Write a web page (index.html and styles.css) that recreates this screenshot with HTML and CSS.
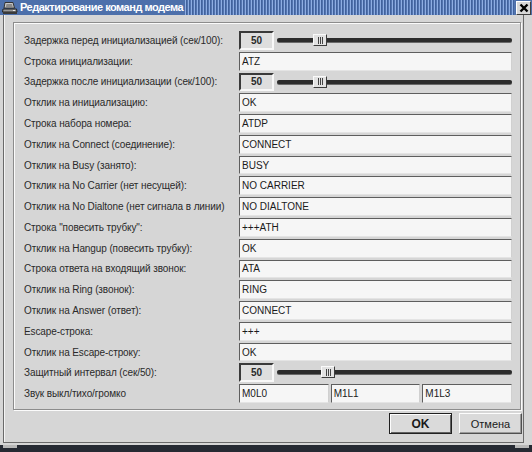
FILE: index.html
```html
<!DOCTYPE html>
<html lang="ru">
<head>
<meta charset="utf-8">
<title>Редактирование команд модема</title>
<link rel="stylesheet" href="styles.css">
</head>
<body>
<div class="titlebar">
  <svg class="appicon" width="16" height="14" viewBox="0 0 16 14">
    <path d="M3 1.5 L11 1.5 L12.5 7 L2 7 Z" fill="#c8c8c8" stroke="#333" stroke-width="1"/>
    <path d="M4.5 3 L10 3 L10.8 6 L3.8 6 Z" fill="#8a8a8a"/>
    <path d="M1 8 L14.5 8 L15 11 L0.5 11 Z" fill="#9a9a9a" stroke="#222" stroke-width="1"/>
    <rect x="1" y="11" width="14" height="2" fill="#3a3a3a"/>
    <rect x="11" y="9" width="2" height="1" fill="#e8e8e8"/>
  </svg>
  <span class="title">Редактирование команд модема</span>
  <span class="pattern"></span>
  <span class="close">
    <svg width="10" height="10" viewBox="0 0 10 10"><path d="M1.5 1.5 L8.5 8.5 M8.5 1.5 L1.5 8.5" stroke="#000" stroke-width="2.4"/></svg>
  </span>
</div>
<div class="frame">
  <div class="client">
    <div class="group">
      <div class="form">
        <div class="label">Задержка перед инициализацией (сек/100):</div>
        <div class="spinrow"><div class="spin">50</div><div class="slider"><span class="track"></span><span class="thumb" style="left:36px"><i></i><i></i><i></i></span></div></div>

        <div class="label">Строка инициализации:</div>
        <div class="field">ATZ</div>

        <div class="label">Задержка после инициализации (сек/100):</div>
        <div class="spinrow"><div class="spin">50</div><div class="slider"><span class="track"></span><span class="thumb" style="left:36px"><i></i><i></i><i></i></span></div></div>

        <div class="label">Отклик на инициализацию:</div>
        <div class="field">OK</div>

        <div class="label">Строка набора номера:</div>
        <div class="field">ATDP</div>

        <div class="label">Отклик на Connect (соединение):</div>
        <div class="field">CONNECT</div>

        <div class="label">Отклик на Busy (занято):</div>
        <div class="field">BUSY</div>

        <div class="label">Отклик на No Carrier (нет несущей):</div>
        <div class="field">NO CARRIER</div>

        <div class="label">Отклик на No Dialtone (нет сигнала в линии)</div>
        <div class="field">NO DIALTONE</div>

        <div class="label">Строка "повесить трубку":</div>
        <div class="field">+++ATH</div>

        <div class="label">Отклик на Hangup (повесить трубку):</div>
        <div class="field">OK</div>

        <div class="label">Строка ответа на входящий звонок:</div>
        <div class="field">ATA</div>

        <div class="label">Отклик на Ring (звонок):</div>
        <div class="field">RING</div>

        <div class="label">Отклик на Answer (ответ):</div>
        <div class="field">CONNECT</div>

        <div class="label">Escape-строка:</div>
        <div class="field">+++</div>

        <div class="label">Отклик на Escape-строку:</div>
        <div class="field">OK</div>

        <div class="label">Защитный интервал (сек/50):</div>
        <div class="spinrow"><div class="spin">50</div><div class="slider"><span class="track"></span><span class="thumb" style="left:44px"><i></i><i></i><i></i></span></div></div>

        <div class="label">Звук выкл/тихо/громко</div>
        <div class="triple"><div class="field">M0L0</div><div class="field">M1L1</div><div class="field">M1L3</div></div>
      </div>
    </div>
    <div class="buttons">
      <button class="btn default">OK</button>
      <button class="btn">Отмена</button>
    </div>
  </div>
</div>
<div class="taskbar"><span class="seg"></span><span class="fill"></span><span class="seg"></span></div>
</body>
</html>
```
FILE: styles.css
```css
* { box-sizing: border-box; }
html, body { margin: 0; padding: 0; }
body {
  width: 532px;
  height: 452px;
  overflow: hidden;
  background: #d6d6d6;
  font-family: "Liberation Sans", Arial, sans-serif;
  font-size: 10px;
  color: #2a2a2a;
}

/* title bar */
.titlebar {
  height: 15px;
  display: flex;
  align-items: center;
  background: #4d70ab;
}
.appicon { flex: none; margin: 0 2px 0 2px; }
.title {
  flex: none;
  color: #fff;
  font-weight: bold;
  font-size: 11px;
  letter-spacing: -0.5px;
  line-height: 15px;
  padding-right: 2px;
  background: #4d70ab;
}
.pattern {
  flex: 1;
  align-self: stretch;
  background-color: #5375b0;
  background-image:
    linear-gradient(90deg, #8eaee3 1px, transparent 1px),
    linear-gradient(90deg, #41629c 1px, transparent 1px);
  background-size: 3px 3px, 3px 3px;
  background-position: 0 0, 1px 1px;
}
.close {
  flex: none;
  width: 15px;
  height: 14px;
  margin: 0 1px 0 1px;
  background: #d8d8d8;
  border: 1px solid;
  border-color: #fff #404040 #404040 #fff;
  display: flex;
  align-items: center;
  justify-content: center;
}

/* window frame */
.frame {
  padding: 0 8px 2px 3px;
}
.client {
  height: 428px;
  border: 1px solid #6a6a6a;
  border-top: none;
  box-shadow: inset 1px 0 0 #f4f4f4;
  padding: 7px 1px 8px 9px;
  display: flex;
  flex-direction: column;
}
.group {
  height: 388px;
  margin-right: 1px;
  border: 1px solid #8c8c8c;
  box-shadow: inset 1px 1px 0 #fbfbfb, 1px 1px 0 #fbfbfb;
  padding: 8px 8px 6px 10px;
}
.form {
  height: 372px;
  display: grid;
  grid-template-columns: 215px 1fr;
  grid-template-rows: repeat(18, 1fr);
  row-gap: 2px;
}
.label {
  display: flex;
  align-items: center;
  white-space: nowrap;
  overflow: visible;
  letter-spacing: -0.1px;
}
.field {
  background: #f6f6f6;
  border: 1px solid;
  border-color: #5e5e5e #d0d0d0 #e4e4e4 #5e5e5e;
  padding: 0 2px;
  display: flex;
  align-items: center;
  white-space: nowrap;
  color: #1a1a1a;
}
.triple {
  display: grid;
  grid-template-columns: 1fr 1fr 1fr;
  column-gap: 2px;
}
.spinrow {
  display: flex;
  gap: 3px;
}
.spin {
  width: 35px;
  flex: none;
  background: #dedede;
  border: 2px solid;
  border-color: #3a3a3a #f8f8f8 #f8f8f8 #3a3a3a;
  display: flex;
  align-items: center;
  justify-content: center;
  font-weight: bold;
  color: #2a2a2a;
}
.slider {
  flex: 1;
  position: relative;
}
.track {
  position: absolute;
  left: 0;
  right: 0;
  top: 7px;
  height: 4px;
  border-radius: 2px;
  background: #2c2c2c;
  box-shadow: 0 1px 0 #6a6a6a;
}
.thumb {
  position: absolute;
  top: 3px;
  width: 14px;
  height: 12px;
  background: #e2e2e2;
  border: 1px solid;
  border-color: #fafafa #3c3c3c #3c3c3c #fafafa;
  display: flex;
  justify-content: center;
  align-items: center;
  gap: 1px;
}
.thumb i {
  display: block;
  width: 1px;
  height: 7px;
  background: #444;
}

/* buttons */
.buttons {
  margin-top: 3px;
  display: flex;
  justify-content: flex-end;
  gap: 7px;
}
.btn {
  width: 63px;
  height: 21px;
  margin: 0;
  padding: 0;
  background: #dadada;
  border: 1px solid;
  border-color: #fdfdfd #505050 #505050 #fdfdfd;
  box-shadow: inset -1px -1px 0 #9a9a9a;
  font-family: "Liberation Sans", Arial, sans-serif;
  font-size: 11px;
  color: #1a1a1a;
}
.btn.default {
  border: 1px solid #202020;
  box-shadow: inset 1px 1px 0 #fdfdfd, inset -1px -1px 0 #606060;
  font-weight: bold;
  font-size: 12px;
}

/* bottom strip */
.taskbar {
  height: 7px;
  display: flex;
  background: #262a33;
}
.taskbar .seg {
  width: 14px;
  height: 3px;
  margin: 0 3px;
  background: #b8b8b8;
}
.taskbar .fill { flex: 1; }
```
